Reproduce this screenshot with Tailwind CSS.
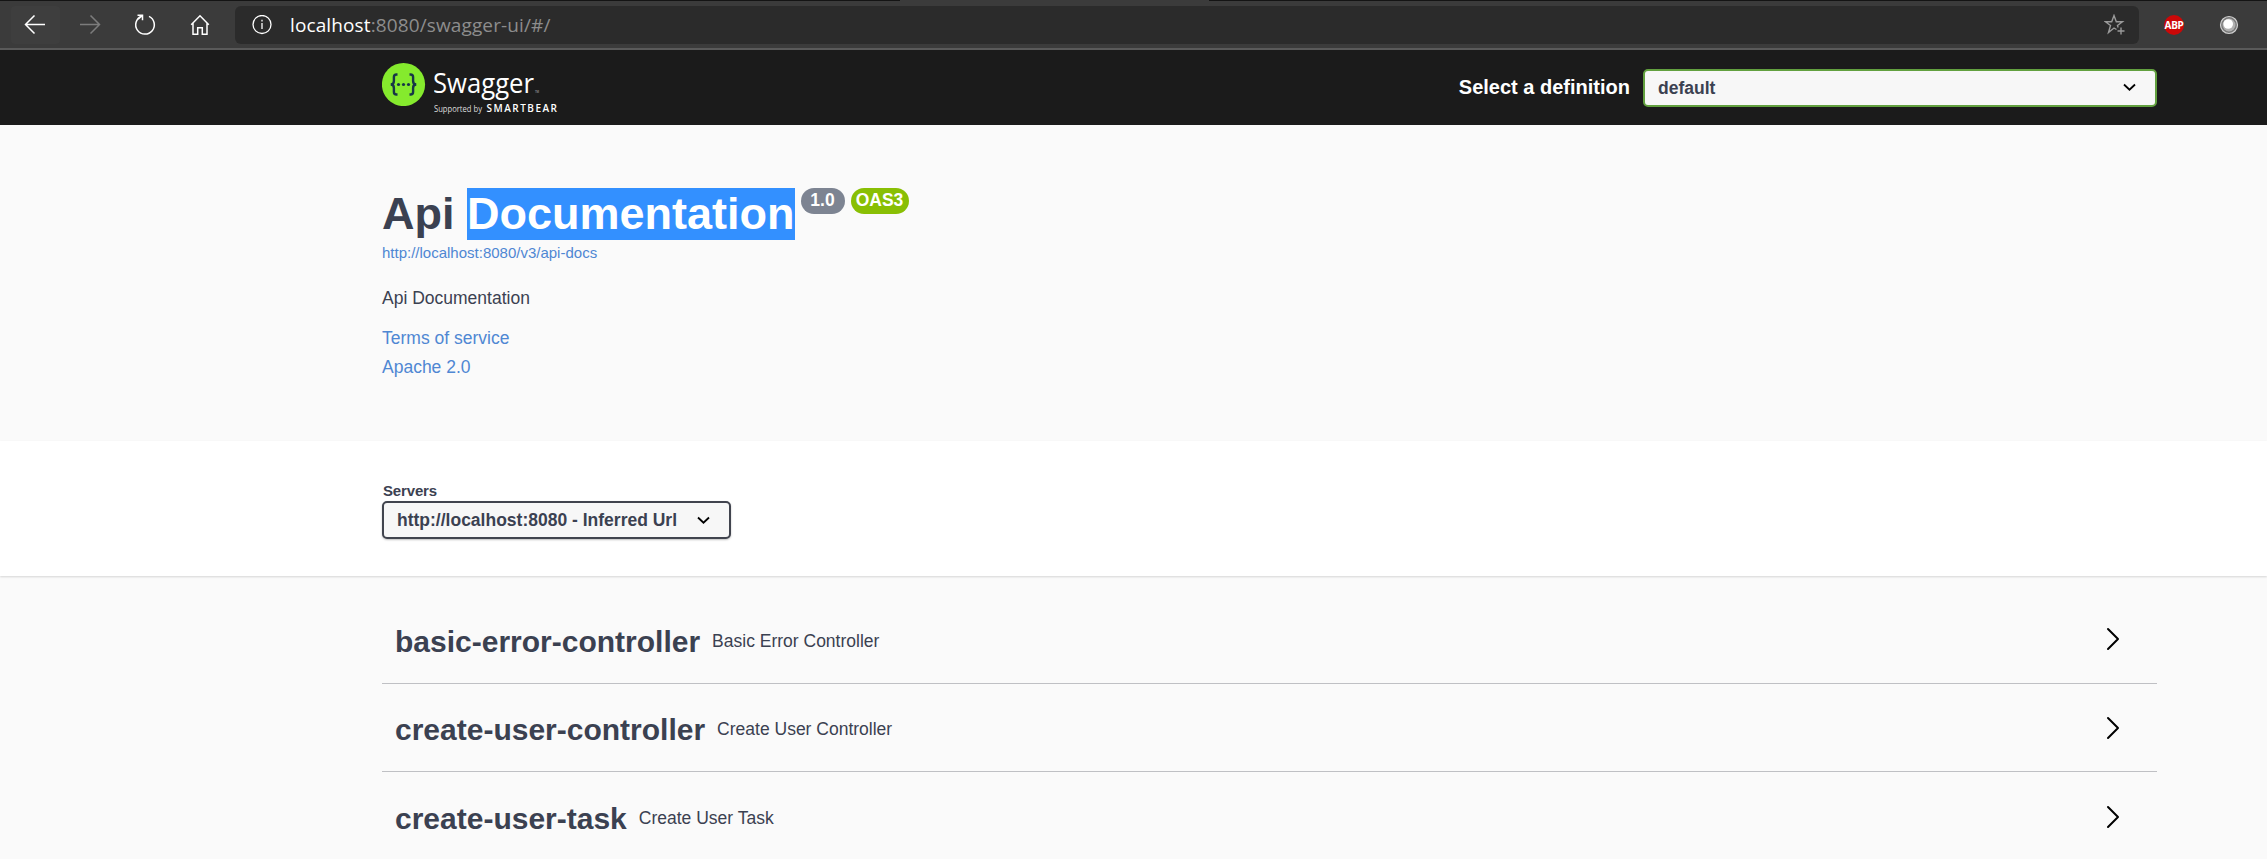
<!DOCTYPE html>
<html lang="en">
<head>
<meta charset="utf-8">
<title>Swagger UI</title>
<script src="https://cdn.jsdelivr.net/npm/@tailwindcss/browser@4"></script>
</head>
<body class="w-[2267px] h-[859px] overflow-hidden bg-[#fafafa] text-[#3b4151] font-['Liberation_Sans',sans-serif]">
<!-- Browser toolbar -->
<div class="h-[50px] bg-[#3b3b3b] border-b-2 border-[#5a5a5a] flex flex-col">
  <div class="h-px flex shrink-0"><div class="w-[900px] bg-[#141414]"></div><div class="w-[309px]"></div><div class="flex-1 bg-[#141414]"></div></div>
  <div class="flex h-[38px] mt-[5px] items-center pl-[11px]">
    <div class="w-[49px] h-[38px] rounded bg-[#3e3e3e] flex items-center justify-center pr-[2px]"><svg width="22" height="20" viewBox="0 0 22 20" fill="none" stroke="#fff" stroke-width="1.5"><path d="M21 9.500H1.500M10.500 .5L1.500 9.500l9 9"/></svg></div>
    <div class="w-[49px] ml-[6px] flex items-center justify-center pr-[2px]"><svg width="22" height="20" viewBox="0 0 22 20" fill="none" stroke="#7c7c7c" stroke-width="1.5"><path d="M1 9.500h19.500M11.500 .5l9 9-9 9"/></svg></div>
    <div class="w-[49px] ml-[6px] flex items-center justify-center pr-[2px]"><svg width="22" height="22" viewBox="0 0 22 22" fill="none" stroke="#fff" stroke-width="1.5"><path d="M15 2.400A9.300 9.300 0 1 1 7.500 2.200M3.500 1.200H8.500v5M8.500 1.200L4.200 5.200"/></svg></div>
    <div class="w-[49px] ml-[6px] flex items-center justify-center pr-[2px]"><svg width="20" height="22" viewBox="0 0 20 22" fill="none" stroke="#fff" stroke-width="1.5"><path d="M1.200 10.700L10 1.800l8.800 8.900M3 9.200V20.300h4.700v-6.500h4.600v6.500H17V9.200"/></svg></div>
    <div class="ml-[10px] w-[1904px] h-[38px] rounded-md bg-[#2b2b2b] flex items-center">
      <svg class="ml-[17px]" width="20" height="20" viewBox="0 0 20 20" fill="none" stroke="#fff" stroke-width="1.300"><circle cx="10" cy="9.500" r="9"/><path d="M10 8v6M10 4.800v1.600"/></svg>
      <div class="ml-[18px] text-[19px] tracking-[0.12px] leading-[38px] text-[#8d8d8d] font-['Open_Sans',sans-serif] whitespace-nowrap"><span class="text-white">localhost</span>:8080/swagger-ui/#/</div>
      <svg class="ml-auto mr-[13px]" width="22" height="22" viewBox="0 0 22 22" fill="none" stroke="#9a9a9a" stroke-width="1.400"><path d="M12.500 15.500L10 14l-5.500 4.500 2-7L1.500 7.700h6.200L10 1.500l2.300 6.200h6.200l-5 3.800.6 2M17 13.500v7M13.500 17h7"/></svg>
    </div>
    <div class="ml-[25px] size-[20px] rounded-full bg-[#cc0808] flex items-center justify-center"><span class="text-white text-[10px] leading-[20px] font-bold font-['Noto_Sans',sans-serif] shrink-0 tracking-[-0.2px]">ABP</span></div>
    <svg class="ml-[35px]" width="20" height="20" viewBox="0 0 20 20"><circle cx="10" cy="10" r="8.500" fill="#777" stroke="#d0d0d0" stroke-width="1.200"/><circle cx="10" cy="10" r="6.500" fill="#b0b0b0"/><circle cx="9.200" cy="9" r="4.800" fill="#fff"/></svg>
  </div>
</div>
<!-- Top bar -->
<header class="h-[75px] bg-[#1b1b1b] pl-[382px] pr-[110px] flex justify-between">
  <div class="flex pt-[12px]">
    <svg width="44" height="44" viewBox="0 0 44 44"><circle cx="21.500" cy="22.500" r="21.600" fill="#85ea2d"/><g fill="none" stroke="#173647" stroke-width="2.400"><path d="M15.500 12.500h-1q-2.600 0-2.600 2.600v4q0 3.400-3.200 3.400 3.200 0 3.200 3.400v4q0 2.600 2.600 2.600h1M27.500 12.500h1q2.600 0 2.600 2.600v4q0 3.400 3.200 3.400-3.200 0-3.200 3.400v4q0 2.600-2.600 2.600h-1"/></g><g fill="#173647"><circle cx="16.500" cy="22.500" r="1.600"/><circle cx="21.500" cy="22.500" r="1.600"/><circle cx="26.500" cy="22.500" r="1.600"/></g></svg>
    <svg class="ml-[8px]" width="126" height="56" viewBox="0 0 126 56" fill="#fff" font-family="Open Sans, sans-serif">
      <text x="-1" y="31" font-size="27.500" textLength="101" lengthAdjust="spacingAndGlyphs">Swagger</text>
      <text x="101" y="31" font-size="2.800" fill="#bbb">TM</text>
      <text x="0" y="49.500" font-size="8.500" fill="#ddd" textLength="48" lengthAdjust="spacingAndGlyphs">Supported by</text>
      <text x="52.500" y="49.500" font-size="10" font-weight="600" textLength="70.500">SMARTBEAR</text>
    </svg>
  </div>
  <div class="flex items-center">
    <label class="text-white font-bold text-[20px] mr-[13px] pb-[2px]">Select a definition</label>
    <div class="w-[514px] h-[38px] border-2 border-[#62a03f] rounded-[5px] bg-[#f7f7f7] flex items-center justify-between pl-[13px] pr-[19px] font-bold text-[17.5px]"><span class="pt-[2px]">default</span><svg width="13" height="9" viewBox="0 0 13 9" fill="none" stroke="#000" stroke-width="1.800"><path d="M1 1.500l5.500 5.200L12 1.500"/></svg></div>
  </div>
</header>
<!-- API information -->
<section class="h-[316px] pl-[382px] pt-[63px]">
  <div class="flex items-start">
    <h1 class="text-[45px] leading-[52px] font-bold whitespace-pre">Api <span class="inline-block h-[52px] bg-[#3390ff] text-white">Documentation</span></h1>
    <span class="ml-[6px] w-[44px] h-[26px] rounded-full bg-[#7d8492] text-white font-bold text-[17.5px] leading-[24px] text-center">1.0</span>
    <span class="ml-[6px] w-[58px] h-[26px] rounded-full bg-[#89bf04] text-white font-bold text-[17.5px] leading-[24px] text-center">OAS3</span>
  </div>
  <a class="block text-[15px] leading-[17px] mt-[4px] text-[#4f87d3]">http://localhost:8080/v3/api-docs</a>
  <p class="text-[17.5px] leading-[20px] mt-[27px]">Api Documentation</p>
  <a class="block text-[17.5px] leading-[20px] mt-[20px] text-[#4f87d3]">Terms of service</a>
  <a class="block text-[17.5px] leading-[20px] mt-[9px] text-[#4f87d3]">Apache 2.0</a>
</section>
<!-- Servers -->
<section class="h-[135px] bg-white pl-[382px] pt-[41px] shadow-[0_1px_2px_rgba(0,0,0,0.15)]">
  <div class="text-[15px] leading-[17px] font-bold pl-px tracking-[-0.15px]">Servers</div>
  <div class="mt-[2px] w-[349px] h-[38px] border-2 border-[#41444e] rounded-[5px] bg-[#f7f7f7] shadow-[0_1px_2px_rgba(0,0,0,0.25)] flex items-center justify-between pl-[13px] pr-[19px] font-bold text-[17.5px]">http://localhost:8080 - Inferred Url<svg width="13" height="9" viewBox="0 0 13 9" fill="none" stroke="#000" stroke-width="1.800"><path d="M1 1.500l5.500 5.200L12 1.500"/></svg></div>
</section>
<!-- Controllers -->
<main class="ml-[382px] w-[1775px] pt-[19px]">
  <div class="h-[89px] border-b border-[#bfc0c4] flex items-center pl-[13px] pr-[37px]"><h2 class="text-[30px] font-bold pt-[4px]">basic-error-controller</h2><span class="ml-[12px] text-[17.5px] pt-[4px]">Basic Error Controller</span><svg class="ml-auto" width="14" height="24" viewBox="0 0 14 24" fill="none" stroke="#000" stroke-width="2" stroke-linecap="round" stroke-linejoin="round"><path d="M2 2l10 10L2 22"/></svg></div>
  <div class="h-[88px] border-b border-[#bfc0c4] flex items-center pl-[13px] pr-[37px]"><h2 class="text-[30px] font-bold pt-[4px]">create-user-controller</h2><span class="ml-[12px] text-[17.5px] pt-[4px]">Create User Controller</span><svg class="ml-auto" width="14" height="24" viewBox="0 0 14 24" fill="none" stroke="#000" stroke-width="2" stroke-linecap="round" stroke-linejoin="round"><path d="M2 2l10 10L2 22"/></svg></div>
  <div class="h-[89px] flex items-center pl-[13px] pr-[37px]"><h2 class="text-[30px] font-bold pt-[4px]">create-user-task</h2><span class="ml-[12px] text-[17.5px] pt-[4px]">Create User Task</span><svg class="ml-auto" width="14" height="24" viewBox="0 0 14 24" fill="none" stroke="#000" stroke-width="2" stroke-linecap="round" stroke-linejoin="round"><path d="M2 2l10 10L2 22"/></svg></div>
</main>
</body>
</html>
